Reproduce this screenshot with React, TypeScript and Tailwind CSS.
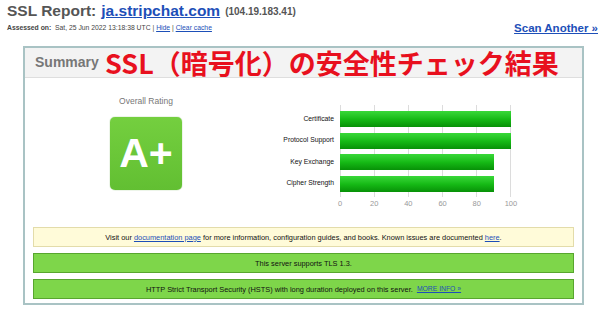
import React from "react";

const bars = [
  { label: "Certificate", value: 100 },
  { label: "Protocol Support", value: 100 },
  { label: "Key Exchange", value: 90 },
  { label: "Cipher Strength", value: 90 },
];

const ticks = [0, 20, 40, 60, 80, 100];

function Chart() {
  return (
    <div className="flex flex-col">
      <div className="flex">
        <div className="flex w-[73px] flex-col items-end gap-[5.5px] pr-[6px] pt-[6px]">
          {bars.map((b) => (
            <div key={b.label} className="flex h-[16px] items-center whitespace-nowrap text-[6.8px] text-[#111]">
              {b.label}
            </div>
          ))}
        </div>
        <div className="relative h-[92px] w-[171px]">
          {/* grid lines */}
          <div className="absolute inset-0 flex justify-between">
            {ticks.map((t) => (
              <div key={t} className="h-full w-px bg-[#dcdcdc]" />
            ))}
          </div>
          <div className="relative flex flex-col gap-[5.5px] pt-[6px]">
            {bars.map((b) => (
              <div
                key={b.label}
                className="h-[16px] bg-gradient-to-b from-[#38d838] via-[#16bb16] to-[#079107]"
                style={{ width: `${(b.value / 100) * 171}px` }}
              />
            ))}
          </div>
        </div>
      </div>
      <div className="ml-[73px] flex w-[171px] justify-between pt-[1px]">
        {ticks.map((t) => (
          <span key={t} className="flex w-0 justify-center text-[7.5px] text-[#999]">
            {t}
          </span>
        ))}
      </div>
    </div>
  );
}

export default function App() {
  return (
    <div className="h-[309px] w-[600px] overflow-hidden bg-white font-['Liberation_Sans',Arial,sans-serif]">
      <div className="pl-[7px] pr-[2px]">
        <div className="flex h-[21px] items-center gap-[5px] leading-none">
          <span className="text-[15.5px] font-bold text-[#555]">SSL Report:</span>
          <a className="text-[15.5px] font-bold text-[#1d4fb8] underline">ja.stripchat.com</a>
          <span className="pt-[2px] text-[10px] font-bold text-[#555]">(104.19.183.41)</span>
        </div>
        <div className="flex h-[14px] items-center justify-between leading-none">
          <div className="text-[6.8px] text-[#444]">
            <span className="font-bold">Assessed on:</span>&nbsp; Sat, 25 Jun 2022 13:18:38 UTC |{" "}
            <a className="text-[#1d4fb8] underline">Hide</a> |{" "}
            <a className="text-[#1d4fb8] underline">Clear cache</a>
          </div>
          <a className="mt-[2px] text-[11.5px] font-bold text-[#1d4fb8] underline">Scan Another »</a>
        </div>
      </div>

      <div className="ml-[23px] mt-[11px] h-[259px] w-[561px] border-[2px] border-[#a9c3c4] bg-white">
        <div className="flex h-[30px] items-center border-b border-[#dedede] bg-[#f3f3f3] pl-[10px]">
          <span className="w-[70px] text-[14px] font-bold text-[#777]">Summary</span>
          <span className="text-[27px] font-bold leading-none text-[#e8101e] font-['Noto_Sans_CJK_JP','Noto_Sans',sans-serif]">
            SSL（暗号化）の安全性チェック結果
          </span>
        </div>

        <div className="flex">
          <div className="flex w-[242px] flex-col items-center pt-[17px]">
            <div className="text-[8.5px] text-[#777]">Overall Rating</div>
            <div className="mt-[9px] flex h-[73px] w-[72px] items-center justify-center rounded-[5px] bg-gradient-to-b from-[#74cf3f] to-[#62bf32] shadow-[0_0_1px_#4a9a22]">
              <span className="text-[41px] font-bold text-white">A+</span>
            </div>
          </div>
          <div className="pt-[27px]">
            <Chart />
          </div>
        </div>

        <div className="mt-[18px] flex flex-col gap-[6px] px-[8px]">
          <div className="flex h-[20px] items-center justify-center border border-[#e3dcaa] bg-[#fffbd9] text-[7.4px] text-[#111]">
            Visit our&nbsp;<a className="text-[#1d4fb8] underline">documentation page</a>&nbsp;for more information, configuration guides, and books. Known issues are documented&nbsp;
            <a className="text-[#1d4fb8] underline">here</a>.
          </div>
          <div className="flex h-[20px] items-center justify-center border border-[#58a62e] bg-[#7ed64a] text-[7.4px] text-[#111]">
            This server supports TLS 1.3.
          </div>
          <div className="flex h-[20px] items-center justify-center border border-[#58a62e] bg-[#7ed64a] text-[7.4px] text-[#111]">
            HTTP Strict Transport Security (HSTS) with long duration deployed on this server.&nbsp;&nbsp;
            <a className="text-[6.8px] text-[#1d4fb8] underline">MORE INFO »</a>
          </div>
        </div>
      </div>
    </div>
  );
}
